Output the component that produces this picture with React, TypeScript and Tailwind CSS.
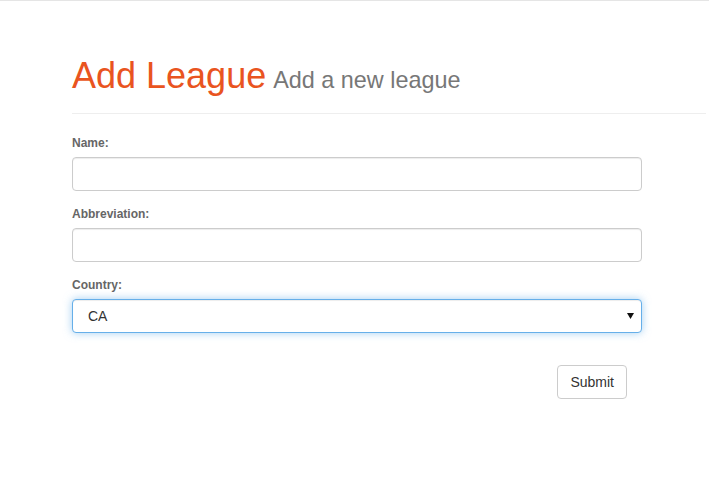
import { useState } from "react";

const inputCls =
  "block w-[570px] h-[34px] px-3 text-[14px] text-[#555] bg-white border border-[#ccc] rounded-[4px] shadow-[inset_0_1px_1px_rgba(0,0,0,0.075)] outline-none";

const App = () => {
  const [name, setName] = useState("");
  const [abbr, setAbbr] = useState("");
  const [country, setCountry] = useState("CA");

  return (
    <div className="min-h-[504px] bg-white border-t border-[#e5e5e5] font-['Liberation_Sans',Arial,sans-serif]">
      <div className="pl-[72px] pr-[3px] pt-[55px]">
        <div className="pb-[13px] border-b border-[#eee]">
          <h1 className="text-[36px] leading-[40px] text-[#e95420]">
            Add League
            <small className="ml-[7px] text-[23.4px] text-[#777]">Add a new league</small>
          </h1>
        </div>

        <form className="pt-[21px]" onSubmit={(e) => e.preventDefault()}>
          <div className="mb-[15px]">
            <label className="block mb-[5px] text-[12px] leading-[17px] font-bold text-[#666]">
              Name:
            </label>
            <input
              className={inputCls}
              value={name}
              onChange={(e) => setName(e.target.value)}
            />
          </div>
          <div className="mb-[15px]">
            <label className="block mb-[5px] text-[12px] leading-[17px] font-bold text-[#666]">
              Abbreviation:
            </label>
            <input
              className={inputCls}
              value={abbr}
              onChange={(e) => setAbbr(e.target.value)}
            />
          </div>
          <div className="mb-[32px]">
            <label className="block mb-[5px] text-[12px] leading-[17px] font-bold text-[#666]">
              Country:
            </label>
            <div className="relative w-[570px]">
              <select
                className="block w-[570px] h-[34px] pl-[15px] pr-8 text-[14px] text-[#333] bg-white border border-[#66afe9] rounded-[4px] appearance-none outline-none shadow-[inset_0_1px_1px_rgba(0,0,0,0.075),0_0_8px_rgba(102,175,233,0.6)]"
                value={country}
                onChange={(e) => setCountry(e.target.value)}
              >
                <option value="CA">CA</option>
                <option value="US">US</option>
                <option value="MX">MX</option>
              </select>
              <svg
                className="absolute right-[8px] top-[14px] pointer-events-none"
                width="7"
                height="6"
                viewBox="0 0 7 6"
              >
                <path d="M0 0h7L3.5 6z" fill="#111" />
              </svg>
            </div>
          </div>
          <div className="flex w-[555px] justify-end">
            <button
              type="submit"
              className="h-[34px] px-3 text-[14px] text-[#333] bg-white border border-[#ccc] rounded-[4px]"
            >
              Submit
            </button>
          </div>
        </form>
      </div>
    </div>
  );
};

export default App;
